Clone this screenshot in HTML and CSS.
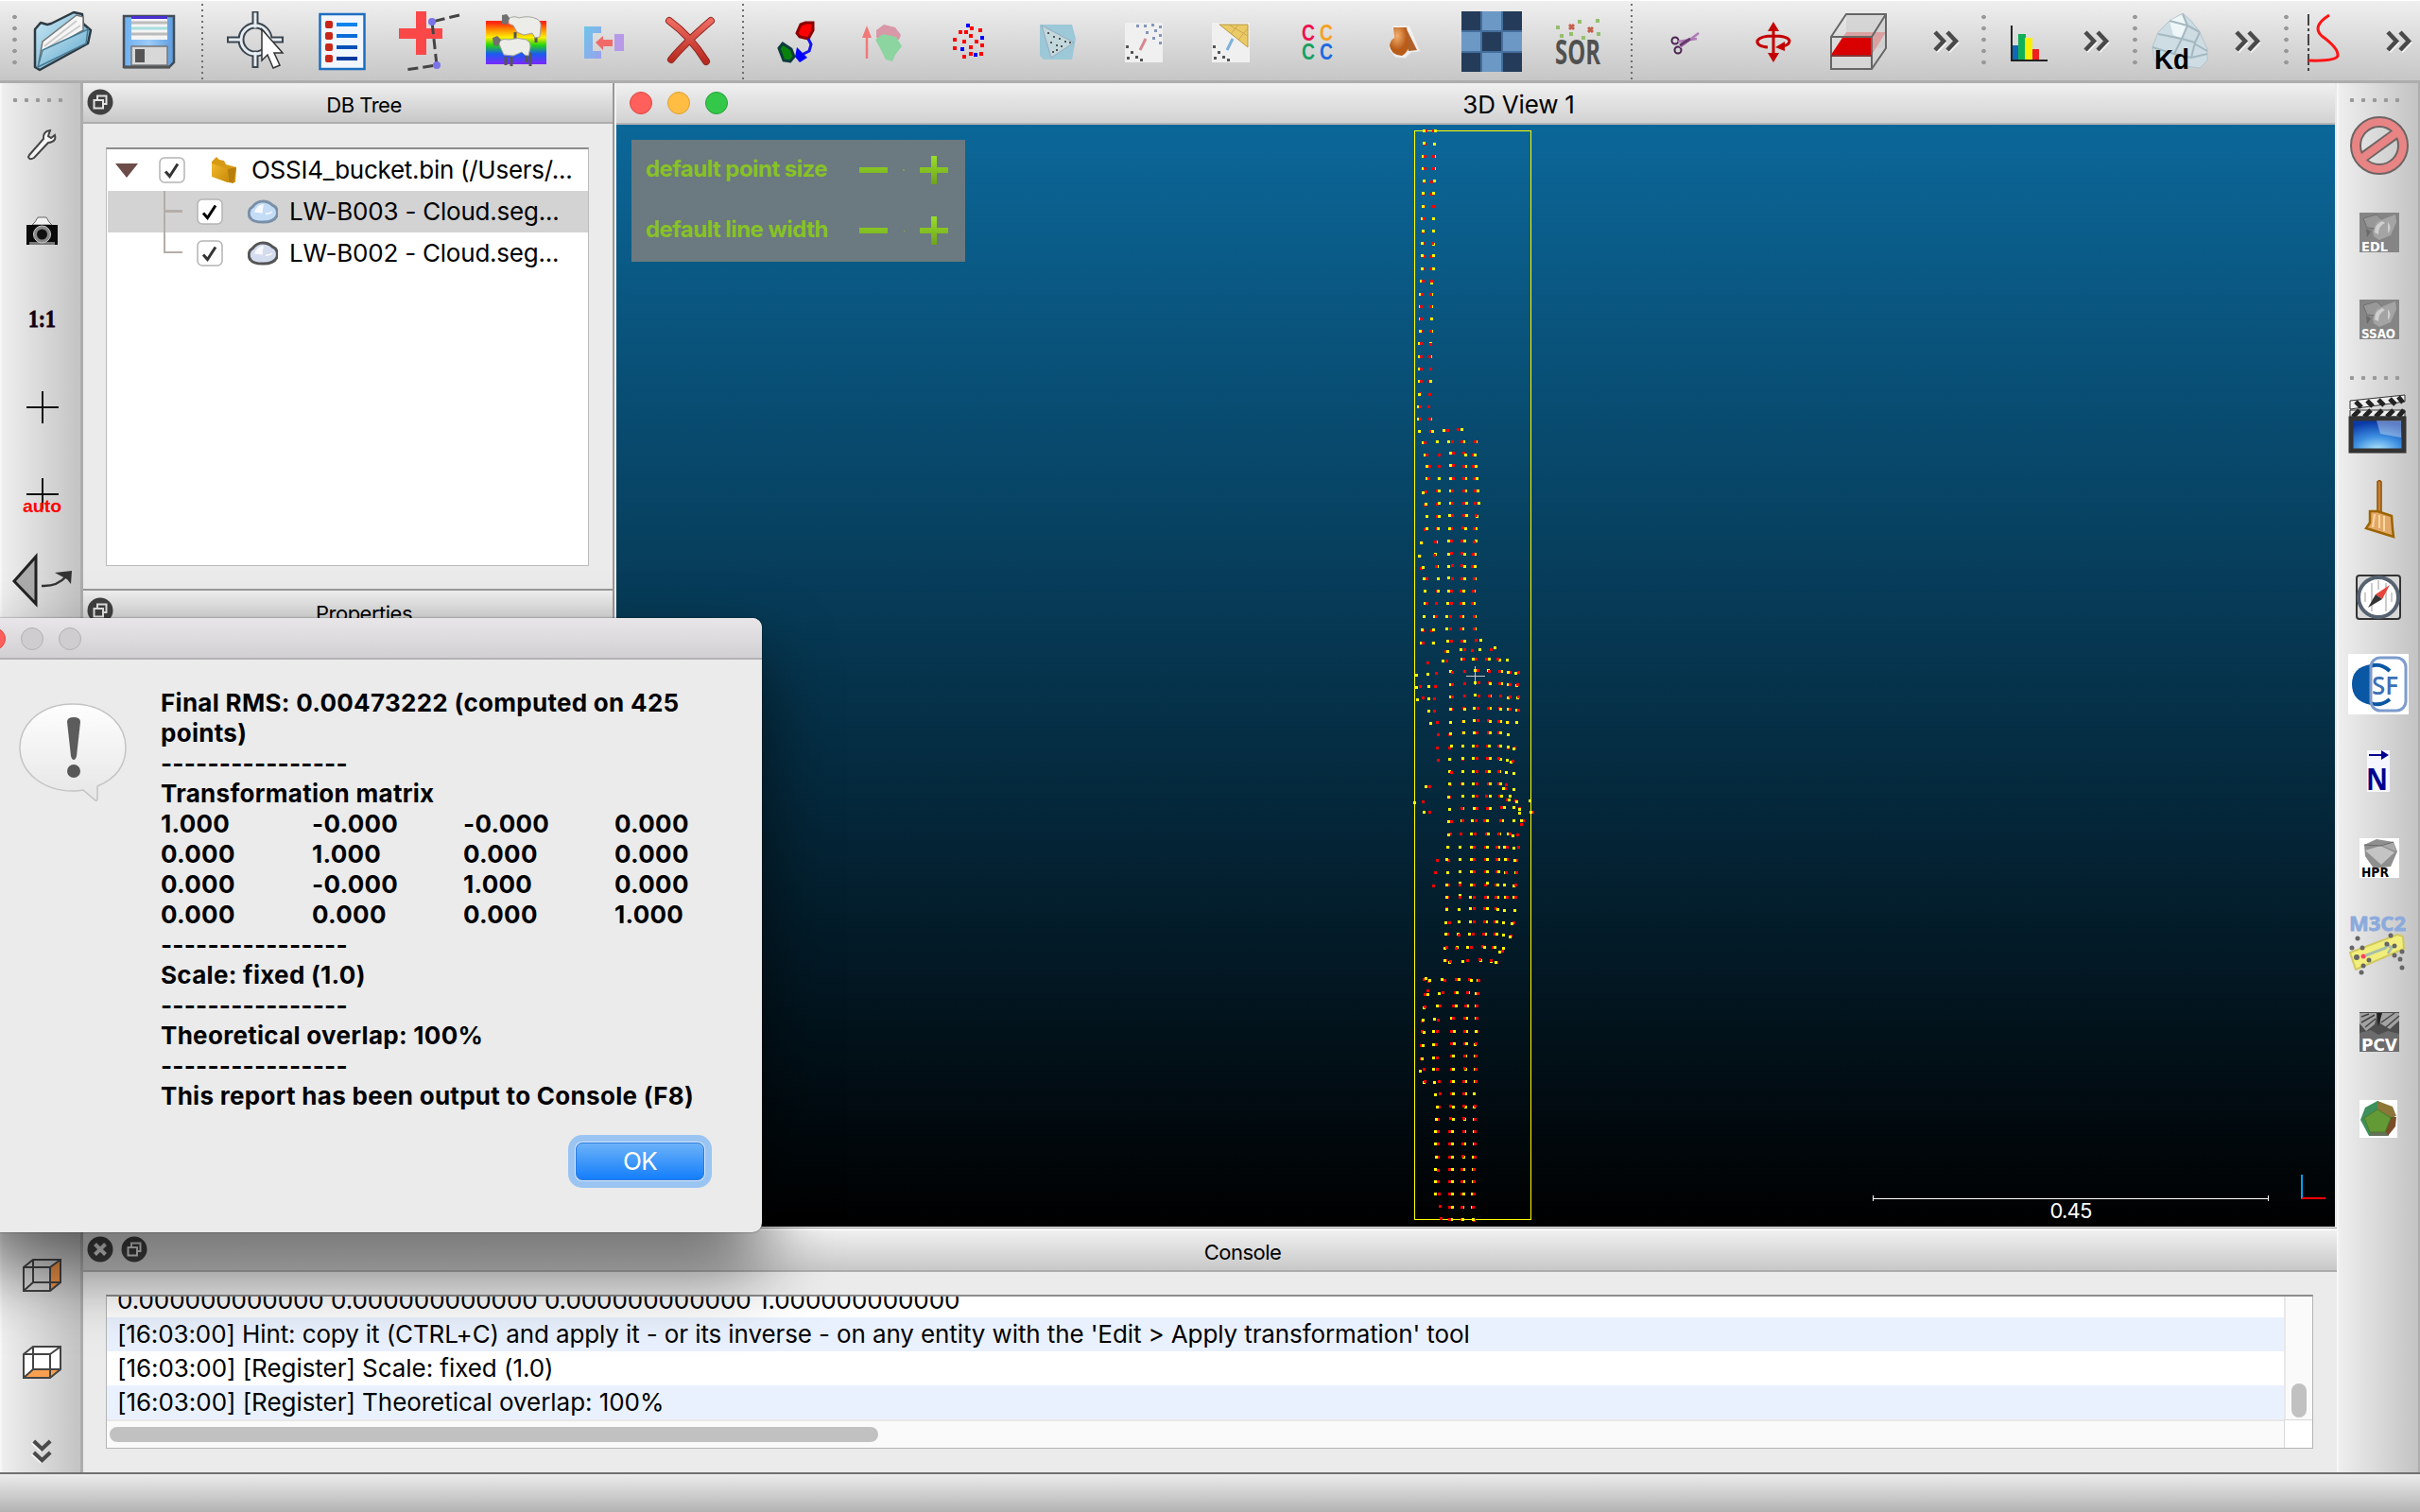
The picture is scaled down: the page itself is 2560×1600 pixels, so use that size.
FILE: index.html
```html
<!DOCTYPE html>
<html lang="en">
<head>
<meta charset="utf-8">
<title>CloudCompare</title>
<link rel="stylesheet" href="styles.css">
</head>
<body>
<svg class="defs" width="0" height="0">
  <defs>
    <linearGradient id="gGreen" x1="0" y1="0" x2="0" y2="1"><stop offset="0" stop-color="#99de2a"/><stop offset="1" stop-color="#6da31c"/></linearGradient>
    <linearGradient id="gFolder" x1="0" y1="0" x2="1" y2="1"><stop offset="0" stop-color="#cdeaf6"/><stop offset=".6" stop-color="#86bfdb"/><stop offset="1" stop-color="#a9d9ec"/></linearGradient>
    <linearGradient id="gDisk" x1="0" y1="0" x2="1" y2="0"><stop offset="0" stop-color="#6fb0f0"/><stop offset=".5" stop-color="#9ccbf8"/><stop offset="1" stop-color="#5b9bdf"/></linearGradient>
    <linearGradient id="gRain" x1="0" y1="0" x2="0" y2="1"><stop offset=".05" stop-color="#ff2a10"/><stop offset=".2" stop-color="#ff8a00"/><stop offset=".38" stop-color="#ffee00"/><stop offset=".56" stop-color="#22d410"/><stop offset=".76" stop-color="#1a5cf0"/><stop offset="1" stop-color="#7a28ff"/></linearGradient>
    <linearGradient id="gMerge" x1="0" y1="0" x2="1" y2="1"><stop offset="0" stop-color="#6cc6e8"/><stop offset="1" stop-color="#9aa0ee"/></linearGradient>
    <linearGradient id="gX" x1="0" y1="0" x2="0" y2="1"><stop offset="0" stop-color="#ee6a60"/><stop offset="1" stop-color="#b82a20"/></linearGradient>
    <linearGradient id="gGold" x1="0" y1="0" x2="1" y2="1"><stop offset="0" stop-color="#f2b92e"/><stop offset="1" stop-color="#c98a08"/></linearGradient>
    <radialGradient id="gOrange" cx=".4" cy=".3"><stop offset="0" stop-color="#f5b070"/><stop offset="1" stop-color="#b85c18"/></radialGradient>
    <radialGradient id="gScreen" cx=".5" cy="1" r=".9"><stop offset="0" stop-color="#b8ecff"/><stop offset=".5" stop-color="#3c8ee0"/><stop offset="1" stop-color="#0a3aa8"/></radialGradient>
    <linearGradient id="gBubble" x1="0" y1="0" x2="0" y2="1"><stop offset="0" stop-color="#fefefe"/><stop offset="1" stop-color="#e6e6e6"/></linearGradient>
    <symbol id="more" viewBox="0 0 28 24"><path d="M2 2l9 9.500L2 21M15 2l9 9.500L15 21" transform="translate(1.500 2)" fill="none" stroke="#fff" stroke-width="3.500" opacity=".7"/><path d="M2 2l9 9.500L2 21M15 2l9 9.500L15 21" fill="none" stroke="#4a4a4a" stroke-width="4.500"/></symbol>
    <symbol id="float" viewBox="0 0 28 28"><circle cx="14" cy="14" r="13.5" fill="#404040"/><path d="M11 11V7.500h9.500V16H18" fill="none" stroke="#e2e2e2" stroke-width="2"/><rect x="7.500" y="12" width="9.500" height="8.500" fill="#404040" stroke="#e2e2e2" stroke-width="2"/></symbol>
    <symbol id="check" viewBox="0 0 28 28"><rect x="1" y="1" width="26" height="26" rx="5" fill="#fff" stroke="#b4b4b4" stroke-width="1.500"/><path d="M7 15.500l4.500 5L20 7.500" fill="none" stroke="currentColor" stroke-width="3"/></symbol>
    <symbol id="cloud" viewBox="0 0 32 26"><path d="M3 20C0 16 1 10 5 8c3-4 6-6 11-6s8 2 10 4c5 2 6 7 5 11-2 5-8 7-15 7-6 0-11-1-13-4z" fill="var(--fill)" stroke="currentColor" stroke-width="3"/><path d="M8 13q2-6 8-7-1 5-1 8zM19 15q3 1 7-2" fill="#fff" stroke="#fff" stroke-width="1.500" opacity=".85"/></symbol>
    <symbol id="cell" viewBox="0 0 42 42"><path fill="#858585" d="M0 0h42v42H0z"/><path d="M4 6l14-4 8 7-7 8-11-1z" fill="#989898" stroke="#707070"/><path d="M14 20l4-10 12-5 8-3 1 8-6 14-12 5-6-4z" fill="#a4a4a4"/><path d="M16 21q0-9 8-12l3 2q-7 3-7 12zM30 10q5 6 0 12" fill="#cfcfcf"/><path d="M7 17l5 3-4 6z" fill="#6a6a6a"/></symbol>
  </defs>
</svg>

<header class="toolbar">
  <i class="grip"></i>
  <span class="tool first"><svg viewBox="0 0 64 64"><path d="M3 19l6-7 7 2 4-1L44 1l9 2 1 10 8 7-3 14L8 62l-5-3z" fill="url(#gFolder)" stroke="#2e3a42" stroke-width="2.500" stroke-linejoin="round"/><path d="M7 54l4-22L47 4l7 2v14L14 43z" fill="#f6f6f6" stroke="#777" stroke-width="1.500"/><path d="M13 37L47 10M13 41l38-26" stroke="#ccc" stroke-width="2"/><path d="M6 59l5-18 48-22-2 15z" fill="url(#gFolder)" stroke="#47788f" stroke-width="1.500"/></svg></span>
  <span class="tool"><svg viewBox="0 0 64 64"><path d="M5 5h53v49l-5 5H5z" fill="url(#gDisk)" stroke="#444c55" stroke-width="2.500"/><path d="M13 5h38v25H13z" fill="#f4f4f4"/><path d="M13 5h38v3H13z" fill="#4830d0"/><path d="M13 12h38M13 24h38" stroke="#bbb" stroke-width="3"/><path d="M13 18h38" stroke="#a8dede" stroke-width="3"/><path d="M13 37h38v20H13z" fill="#d8d8d8" stroke="#777" stroke-width="1.500"/><path d="M17 40h10v14H17z" fill="#555"/><path d="M5 59h49" stroke="#555" stroke-width="3"/></svg></span>
  <i class="sep"></i>
  <span class="tool"><svg viewBox="0 0 64 64"><g fill="none" stroke="#3b4650" stroke-width="7"><circle cx="32" cy="30" r="15"/><path d="M32 0v18M32 42v18M2 30h18M44 30h18"/></g><g fill="none" stroke="#e8edf2" stroke-width="3"><circle cx="32" cy="30" r="15"/><path d="M32 1.500v16M32 43v15M4 30h14M46 30h14"/></g><path d="M39 19v33l6-6 6 14 7-3-6-13h9z" fill="#fff" stroke="#333" stroke-width="1.500"/></svg></span>
  <span class="tool"><svg viewBox="0 0 64 64"><rect x="8.500" y="3" width="47" height="58" fill="#f2f7ff" stroke="#1d6ec0" stroke-width="2.500"/><g fill="#c8281a"><rect x="14" y="10" width="8" height="8" rx="2"/><rect x="14" y="22" width="8" height="8" rx="2"/><rect x="14" y="34" width="8" height="8" rx="2"/><rect x="14" y="46" width="8" height="8" rx="2"/></g><path fill="#0a84ec" d="M26 12h22v4H26z"/><path fill="#0a6cd8" d="M26 24h22v4H26z"/><path fill="#0850b8" d="M26 36h22v4H26z"/><path fill="#06389c" d="M26 48h22v4H26z"/></svg></span>
  <span class="tool"><svg viewBox="0 0 64 64"><path d="M18 0h11v18h17v11H29v17H18V29H0V18h18z" fill="#fa4848"/><path d="M64 4L35 11l5 46L6 62" fill="none" stroke="#444" stroke-width="3" stroke-dasharray="11 5"/><circle cx="35" cy="11" r="4" fill="#7a74e8"/><circle cx="40" cy="57" r="4" fill="#7a74e8"/></svg></span>
  <span class="tool"><svg viewBox="0 0 64 64"><rect y="10" width="64" height="46" fill="url(#gRain)"/><g stroke="#555" stroke-width="3"><path d="M31 22v8M53 24v9M21 48v9M27 48v10M47 44v14M43 46v8"/></g><g fill="#ecece9" stroke="#a4a4a0"><path d="M24 8q5-4 11-1 10-3 19 1 5 3 4 9l-1 10-5 1-3-5-9 2-7-3-4-7-5-2z"/><path d="M13 32q6-4 12-2 9-3 18 0 5 3 4 8l-2 9-4-1-3-3-9 4-10-1-4-9z"/></g><path d="M17 4l5-1 3 4-3 7-5-1zM7 28l5-2 4 4-3 7-5-1z" fill="#707070"/></svg></span>
  <span class="tool"><svg viewBox="0 0 64 64"><path d="M12 16h18v7h-9v19h9v8H12z" fill="url(#gMerge)"/><path d="M44 24h10v18H44z" fill="#b69ae8"/><path d="M24 33l8-7v4h10v7H32v4z" fill="#f06a68"/></svg></span>
  <span class="tool"><svg viewBox="0 0 64 64"><path d="M10 10q22 16 39 43M54 10Q26 34 12 51" fill="none" stroke="#8c2a22" stroke-width="8" stroke-linecap="round"/><path d="M10 10q22 16 39 43M54 10Q26 34 12 51" fill="none" stroke="url(#gX)" stroke-width="6" stroke-linecap="round"/></svg></span>
  <i class="sep"></i>
  <span class="tool"><svg viewBox="0 0 64 64"><path d="M37 14l5-2h8v8l-5 9-9-2-3-4z" fill="#f00" stroke="#8a0000" stroke-width="3"/><path d="M14 39l4-5 9 6 3 8-4 5-7-1z" fill="#0a820a" stroke="#0c3c3c" stroke-width="3"/><path d="M45 29l3 6-2 7-10 5" fill="none" stroke="#1414f0" stroke-width="3"/><path d="M33 38l-2 10 5 6 8-5z" fill="#00f"/></svg></span>
  <span class="tool"><svg viewBox="0 0 64 64"><path d="M15 50V25" stroke="#f07a78" stroke-width="2.500"/><path d="M15 15l5 13H10z" fill="#f07a78"/><path d="M25 20l8-6 12 3 6 8-2 5-24-2z" fill="#d898a8"/><path d="M24 30l8-6 14 3 6 10-7 9-3 7-7-2-6-12z" fill="#8cd4a0"/></svg></span>
  <span class="tool"><svg viewBox="0 0 64 64"><g fill="#f00"><path d="M26 20h4v4h-4zM32 16h4v4h-4zM41 18h4v4h-4zM20 20h4v4h-4zM31 24h4v4h-4zM14 28h4v4h-4zM24 30h4v4h-4zM37 30h4v4h-4zM14 37h4v4h-4zM31 36h4v4h-4zM43 34h4v4h-4zM31 43h4v4h-4zM24 46h4v4h-4zM42 43h4v4h-4z"/></g><path fill="#00f" d="M28 13h4v4h-4zM43 26h4v4h-4zM22 38h4v4h-4zM36 44h4v4h-4z"/></svg></span>
  <span class="tool"><svg viewBox="0 0 64 64"><path d="M14 14h34l4 15-4 22H18l-4-4z" fill="#9cc8d8"/><path d="M16 15l34 18-24 16z" fill="#c2d8dc" stroke="#9ab"/><g fill="#555"><path d="M22 22h2v2h-2zM28 26h2v2h-2zM34 28h2v2h-2zM40 31h2v2h-2zM25 32h2v2h-2zM31 35h2v2h-2zM36 36h2v2h-2zM27 42h2v2h-2zM31 40h2v2h-2zM45 32h2v2h-2z"/></g></svg></span>
  <span class="tool"><svg viewBox="0 0 64 64"><path fill="#f0f0f0" d="M12 12h40v42H12z"/><path fill="#8296b8" d="M24 14h3v3h-3zM32 14h3v3h-3zM40 13h3v3h-3zM48 15h3v3h-3zM34 21h3v3h-3zM43 19h3v3h-3zM41 27h3v3h-3zM48 24h3v3h-3zM48 32h3v3h-3z"/><path d="M28 41l6-12" stroke="#d48890" stroke-width="3"/><path fill="#555" d="M13 36h3v3h-3zM18 42h3v3h-3zM14 48h3v3h-3zM23 47h3v3h-3zM28 50h3v3h-3z"/></svg></span>
  <span class="tool"><svg viewBox="0 0 64 64"><path fill="#f0f0f0" d="M12 12h40v42H12z"/><path d="M20 14h30v24z" fill="#ecca66" stroke="#b89c44"/><path d="M30 14l20 12M40 14L32 24M50 18L40 30" stroke="#c8a850"/><path d="M28 41l6-12" stroke="#7cb0dc" stroke-width="3"/><path fill="#555" d="M13 36h3v3h-3zM18 42h3v3h-3zM14 48h3v3h-3zM23 47h3v3h-3zM28 50h3v3h-3z"/></svg></span>
  <span class="tool"><svg viewBox="0 0 64 64" class="cc"><text x="15" y="31" fill="#f01050" textLength="14" lengthAdjust="spacingAndGlyphs">C</text><text x="34" y="31" fill="#f8a020" textLength="14" lengthAdjust="spacingAndGlyphs">C</text><text x="15" y="51" fill="#18a060" textLength="14" lengthAdjust="spacingAndGlyphs">C</text><text x="34" y="51" fill="#2068e0" textLength="14" lengthAdjust="spacingAndGlyphs">C</text></svg></span>
  <span class="tool"><svg viewBox="0 0 64 64"><path d="M21 17h15l10 24-8 1-6 6-9-1-6-7 5-12z" fill="#fff" stroke="#fff" stroke-width="3" opacity=".6"/><path d="M33 17l12 24-9 1-5-16z" fill="#b0602a"/><path d="M20 17h14l1 12q4 12-6 18-12-1-13-11 1-6 5-8z" fill="url(#gOrange)"/></svg></span>
  <span class="tool"><svg viewBox="0 0 64 64"><path fill="#243c5a" d="M0 0h64v64H0z"/><path fill="#6c98c6" d="M22 0h20v20H22zM0 22h20v20H0zM44 22h20v20H44zM22 44h20v20H22z"/><path d="M0 21h64M0 43h64M21 0v64M43 0v64" stroke="#456e9c" stroke-width="2"/></svg></span>
  <span class="tool"><svg viewBox="0 0 64 64" class="sor"><path fill="#94bf6c" d="M8 15h4v4H8zM12 24h4v4h-4zM22 22h4v4h-4zM31 9h4v4h-4zM35 26h4v4h-4zM50 8h4v4h-4zM51 22h4v4h-4z"/><path d="M22 14l5 5m0-5l-5 5M42 17l5 5m0-5l-5 5" stroke="#c4604c" stroke-width="3"/><text x="7" y="56" textLength="48" lengthAdjust="spacingAndGlyphs">SOR</text></svg></span>
  <i class="sep"></i>
  <span class="tool"><svg viewBox="0 0 64 64"><g fill="none" stroke="#4a2450" stroke-width="2"><circle cx="22" cy="31" r="3.500"/><circle cx="25" cy="41" r="3.500"/></g><path d="M25 32l20-3M27 38l20-15" stroke="#b07ab8" stroke-width="2.500"/><path d="M27 36l11-7" stroke="#653b6c" stroke-width="3"/></svg></span>
  <span class="tool"><svg viewBox="0 0 64 64"><g fill="none" stroke="#c40000" stroke-width="3"><path d="M34 18v30M28 38q-12-1-11-7 3-5 17-5 15 0 17 5 0 5-8 6"/></g><path fill="#c40000" d="M34 11l6 10H28zM34 54l6-10H28zM46 32v10l-10-4z"/></svg></span>
  <span class="tool"><svg viewBox="0 0 64 64"><path d="M19 3h42v36H19z" fill="#ccc" fill-opacity=".6"/><path d="M3 27h43v34H3z" fill="#ddd" fill-opacity=".5"/><path d="M19 22h42L46 46H3z" fill="#e08080" opacity=".6"/><path d="M15 28h31v18H3z" fill="#d80000"/><path d="M19 3h42v36L46 61H3V27zM3 27h43v34M46 27L61 3M19 3L3 27" fill="none" stroke="#666" stroke-width="2"/><path d="M3 47h43" stroke="#833" stroke-width="2"/></svg></span>
  <span class="chev"><svg><use href="#more"/></svg></span>
  <i class="grip"></i>
  <span class="tool mini"><svg viewBox="0 0 64 64"><path d="M13 36h8v16h-8z" fill="#1068b8"/><path d="M20 24h8v28h-8z" fill="#10b058"/><path d="M27 28h8v24h-8z" fill="#f8f000"/><path d="M35 40h7v12h-7z" fill="#f02020"/><path d="M13 15v37h38" fill="none" stroke="#222" stroke-width="2"/></svg></span>
  <span class="chev b"><svg><use href="#more"/></svg></span>
  <i class="grip"></i>
  <span class="tool mini"><svg viewBox="0 0 64 64" class="kd"><path d="M34 2l9 8 9 12 8 18 0 12-8 8-14-2-18 2L4 52 2 38l6-16 12-12z" fill="#cddde3" stroke="#b4c4ca"/><path d="M34 3l5 12-6 14-9-4-4-15z" fill="#eef6f8"/><path d="M34 3l5 12 13 7M39 15L20 10M39 15l-6 14L8 24M33 29l14 4 5-11M47 33l-4 16 17-4M33 29l-8 16L2 38M43 49L25 45M46 34l14 8" fill="none" stroke="#a4b8c0" stroke-width="2"/><text x="4" y="61" textLength="37" lengthAdjust="spacingAndGlyphs">Kd</text></svg></span>
  <span class="chev b"><svg><use href="#more"/></svg></span>
  <i class="grip"></i>
  <span class="tool mini"><svg viewBox="0 0 64 64"><path d="M7 3v60" stroke="#444" stroke-width="2" stroke-dasharray="12 3 3 3"/><path d="M29 4Q10 16 21 26q18 13 17 21-2 6-31 5" fill="none" stroke="#ff1414" stroke-width="3"/></svg></span>
  <span class="chev b"><svg><use href="#more"/></svg></span>
</header>

<main class="work">
  <nav class="side left">
    <i class="hgrip"></i>
    <span class="tool"><svg viewBox="0 0 64 64"><path d="M19 42L34 25q-1-8 7-9l-2 6 3 2 4-3q2 7-7 8L24 45q-5 3-6-1z" fill="#f6f6f6" stroke="#444" stroke-width="2"/></svg></span>
    <span class="tool"><svg viewBox="0 0 64 64"><path d="M25 21l3-5h9l3 5 3 3H22z" fill="#f2f2f2" stroke="#666"/><path fill="#0a0a0a" d="M16 24h33v21H16z"/><path fill="#777" d="M19 42h27v3H19z"/><circle cx="32.500" cy="34" r="9" fill="#888" stroke="#ccc" stroke-width="1"/><circle cx="32.500" cy="34" r="5.500" fill="#111"/></svg></span>
    <span class="tool"><svg viewBox="0 0 64 64" class="one"><text x="18" y="40" textLength="29" lengthAdjust="spacingAndGlyphs">1:1</text></svg></span>
    <span class="tool"><svg viewBox="0 0 64 64"><path d="M33 16v34M16 33h34" stroke="#111" stroke-width="2"/></svg></span>
    <span class="tool"><svg viewBox="0 0 64 64" class="auto"><path d="M33 16v33M16 33h34" stroke="#111" stroke-width="2"/><text x="12" y="52" textLength="41" lengthAdjust="spacingAndGlyphs">auto</text></svg></span>
    <span class="tool"><svg viewBox="0 0 64 64"><path d="M26 7v50L3 33z" fill="#ababab" stroke="#222" stroke-width="3"/><path d="M32 38q16 1 26-10" fill="none" stroke="#333" stroke-width="2.500"/><path d="M64 22l-1 14-4-5-13-7z" fill="#333"/></svg></span>
    <span class="tool lower"><svg viewBox="0 0 64 64"><path d="M41 23l11-8v24l-11 9z" fill="#f09348"/><path d="M13 23l10-8h29v24L41 48H13zM13 23h28v25M41 23l11-8M23 15v24h29M23 39l-10 9" fill="none" stroke="#444" stroke-width="2"/></svg></span>
    <span class="tool"><svg viewBox="0 0 64 64"><path d="M13 22l10-8h29v24L41 48H13z" fill="#fff"/><path d="M23 39h29l-11 9H13z" fill="#f8a050"/><path d="M13 23l10-8h29v24L41 48H13zM13 23h28v25M41 23l11-8M23 15v24h29M23 39l-10 9" fill="none" stroke="#444" stroke-width="2"/></svg></span>
    <span class="down"><svg><use href="#more"/></svg></span>
  </nav>

  <div class="center">
    <div class="upper">
      <section class="docks">
        <div class="bar"><svg class="float"><use href="#float"/></svg><span class="cap">DB Tree</span></div>
        <div class="treewrap">
          <div class="tree">
            <div class="row root"><i class="tri"></i><svg class="chk"><use href="#check"/></svg><svg class="folder" viewBox="0 0 32 30"><path d="M3 6l5-5 3 3 5 1 2 4 11 3-1 16-8 0L3 21z" fill="#d79a14"/><path d="M3 8l17 6v14L3 22z" fill="url(#gGold)"/><path d="M20 14l9-2-3 17-5-1z" fill="#b87e0a"/></svg><span class="t1">OSSI4_bucket.bin (/Users/...</span></div>
            <div class="row kid sel"><i class="br"></i><svg class="chk on"><use href="#check"/></svg><svg class="cloud c1"><use href="#cloud"/></svg><span class="t2">LW-B003 - Cloud.seg...</span></div>
            <div class="row kid last"><i class="br"></i><svg class="chk"><use href="#check"/></svg><svg class="cloud c2"><use href="#cloud"/></svg><span class="t2">LW-B002 - Cloud.seg...</span></div>
          </div>
        </div>
        <div class="bar props"><svg class="float"><use href="#float"/></svg><span class="cap">Properties</span></div>
      </section>

      <section class="view">
        <div class="vtitle"><i class="light r"></i><i class="light y"></i><i class="light g"></i><span>3D View 1</span></div>
        <div class="gl">
          <div class="hot">
            <div class="hrow"><b>default point size</b><svg viewBox="0 0 94 30"><path d="M0 12h30v6H0zM64 12h12V0h6v12h12v6H82v12h-6V18H64z" fill="url(#gGreen)"/><path d="M46 14h2v2h-2z" fill="#7d9f4c"/></svg></div>
            <div class="hrow"><b>default line width</b><svg viewBox="0 0 94 30"><path d="M0 12h30v6H0zM64 12h12V0h6v12h12v6H82v12h-6V18H64z" fill="url(#gGreen)"/><path d="M47 15h1v1h-1z" fill="#87c226"/></svg></div>
          </div>
          <canvas class="points" width="140" height="1166"></canvas>
          <div class="scale"><i></i><span>0.45</span></div>
          <div class="axes"></div>
        </div>
      </section>
    </div>

    <section class="console">
      <div class="bar"><svg class="float" viewBox="0 0 28 28"><circle cx="14" cy="14" r="13.500" fill="#404040"/><path d="M8.500 8.500l11 11m0-11l-11 11" stroke="#dcdcdc" stroke-width="4"/></svg><svg class="float"><use href="#float"/></svg><span class="cap">Console</span></div>
      <div class="logwrap">
        <div class="log">
          <div class="lines">
            <p>0.000000000000 0.000000000000 0.000000000000 1.000000000000</p>
            <p class="alt hint">[16:03:00] Hint: copy it (CTRL+C) and apply it - or its inverse - on any entity with the 'Edit &gt; Apply transformation' tool</p>
            <p>[16:03:00] [Register] Scale: fixed (1.0)</p>
            <p class="alt">[16:03:00] [Register] Theoretical overlap: 100%</p>
          </div>
          <div class="vscroll"><i></i></div>
          <div class="hscroll"><i></i></div>
          <div class="corner"></div>
        </div>
      </div>
    </section>
  </div>

  <nav class="side right">
    <i class="hgrip"></i>
    <span class="tool"><svg viewBox="0 0 64 64"><g fill="none" stroke="#6c6464"><circle cx="33" cy="32" r="25" stroke-width="12"/><path d="M15 45l36-26" stroke-width="12"/></g><g fill="none" stroke="#e98484"><circle cx="33" cy="32" r="25" stroke-width="8"/><path d="M14 46l38-28" stroke-width="8"/></g></svg></span>
    <span class="tool"><svg viewBox="0 0 64 64" class="pix"><use href="#cell" x="12" y="11" width="42" height="42"/><text x="14" y="52" textLength="28" lengthAdjust="spacingAndGlyphs">EDL</text></svg></span>
    <span class="tool"><svg viewBox="0 0 64 64" class="pix"><use href="#cell" x="12" y="11" width="42" height="42"/><text x="14" y="52" textLength="36" lengthAdjust="spacingAndGlyphs">SSAO</text></svg></span>
    <i class="hgrip second"></i>
    <span class="tool"><svg viewBox="0 0 64 64"><path d="M2 8l58-6v7L2 17z" fill="#eee" stroke="#333"/><path d="M2 18h58v7H2z" fill="#eee" stroke="#333"/><path d="M5 25l7-7m5 7l7-7m5 7l7-7m5 7l7-7m5 7l6-7M8 9l6 6m6-7l6 6m6-7l6 6m6-7l6 6m3-8l5 6" stroke="#222" stroke-width="5"/><rect x="3" y="27" width="56" height="34" fill="url(#gScreen)" stroke="#333" stroke-width="5"/><path d="M30 29h26v18l-22-4z" fill="#fff" opacity=".35"/></svg></span>
    <span class="tool"><svg viewBox="0 0 64 64"><path d="M31 2q2-3 4 0v32h-4z" fill="#c98038" stroke="#8a5206" stroke-width="1.500"/><path d="M23 33h8l15 5 1 14 1 8-29-9 4-6z" fill="#e2a868" stroke="#9c6400" stroke-width="2.500"/><path d="M28 36l-2 14M33 37v14M38 38v16" stroke="#ffd8a0" stroke-width="2"/></svg></span>
    <span class="tool"><svg viewBox="0 0 64 64"><rect x="9" y="9" width="46" height="46" rx="3" fill="#d8d8d8" stroke="#333" stroke-width="2"/><circle cx="32" cy="32" r="21" fill="#fff" stroke="#566270" stroke-width="4"/><path d="M25 17v30M32 14v10M40 17v30M18 27v10M46 27v10" stroke="#ccc" stroke-width="2"/><path d="M29 29l15-10-8 15z" fill="#e8443c"/><path d="M29 29l-8 14 15-9z" fill="#333"/></svg></span>
    <span class="tool"><svg viewBox="0 0 64 64" class="sf"><path fill="#fff" d="M0 0h64v64H0z"/><path d="M24 11Q4 14 4 32t20 22z" fill="#0a57a4"/><path d="M24 13q10-4 20 5M24 52q10 4 20-4" fill="none" stroke="#0a57a4" stroke-width="4"/><rect x="24" y="4" width="37" height="56" rx="10" fill="none" stroke="#7c9ccc" stroke-width="3"/><text x="25" y="43" textLength="28" lengthAdjust="spacingAndGlyphs">SF</text></svg></span>
    <span class="tool"><svg viewBox="0 0 64 64" class="nn"><path fill="#f6f6ff" d="M20 10h24v44H20z"/><path d="M22 14h13v-4l8 5-8 5v-4H22z" fill="#000090"/><text x="19" y="52" textLength="23" lengthAdjust="spacingAndGlyphs">N</text></svg></span>
    <span class="tool"><svg viewBox="0 0 64 64" class="hpr"><path fill="#fff" d="M12 11h42v42H12z"/><path d="M17 18l13-6 18 3 4 10-7 16-18 2-9-13z" fill="#8f8f8f"/><path d="M18 24l16-5 15 7-14 13z" fill="#c4c4c4"/><path d="M34 18l14-3 3 10z" fill="#a8a8a8"/><path d="M17 18l17 1 14-4" stroke="#666" fill="none"/><text x="14" y="52" textLength="29" lengthAdjust="spacingAndGlyphs">HPR</text></svg></span>
    <span class="tool"><svg viewBox="0 0 64 64" class="m3"><text x="1" y="17" textLength="60" lengthAdjust="spacingAndGlyphs">M3C2</text><path d="M2 40l50-19 6 2 1 13L8 58z" fill="#f2ee7c" stroke="#d0c860" stroke-width="2"/><path d="M16 44l24-9v-4l6 4-4 6" fill="none" stroke="#a8c0a8" stroke-width="3"/><g fill="#666"><circle cx="10" cy="25" r="2.500"/><circle cx="4" cy="35" r="2.500"/><circle cx="15" cy="35" r="2.500"/><circle cx="9" cy="45" r="3"/><circle cx="22" cy="48" r="2.500"/><circle cx="16" cy="54" r="2.500"/><circle cx="14" cy="61" r="2.500"/><circle cx="45" cy="22" r="2.500"/><circle cx="41" cy="31" r="2.500"/><circle cx="49" cy="33" r="2.500"/><circle cx="57" cy="39" r="2.500"/><circle cx="49" cy="43" r="2.500"/><circle cx="55" cy="47" r="2.500"/><circle cx="57" cy="56" r="2.500"/></g><circle cx="16" cy="44" r="2.500" fill="#f46"/></svg></span>
    <span class="tool"><svg viewBox="0 0 64 64" class="pix"><path fill="#4e4e4e" d="M12 11h42v42H12z"/><path d="M12 12h19l-3 12-9 7-7-8zM34 12h20v8l-10 9-10-6z" fill="#a2a2a2"/><path d="M14 22l14-8M18 27l11-9M35 22l14-10M40 27l14-12M14 16l8-3" stroke="#444" stroke-width="1.500" fill="none"/><path d="M12 33l12-3 8 5 10-4 12 3v19H12z" fill="#6c6c6c"/><path d="M30 12l2 14 4-14z" fill="#222"/><text x="14" y="52" class="big" textLength="38" lengthAdjust="spacingAndGlyphs">PCV</text></svg></span>
    <span class="tool"><svg viewBox="0 0 64 64"><path fill="#fff" d="M12 12h40v40H12z"/><path d="M31 13l-13 7-5 13 9 17 19 0 9-16-3-13z" fill="#3d8f5c"/><path d="M31 13l0 9 14 8 6-1-4-10z" fill="#8c7638"/><path d="M45 30l6 0-1 10-8 10-3-4z" fill="#7a4c28"/><path d="M22 46h18l3 4H24z" fill="#66705a"/><path d="M31 22l14 9-6 15H23L17 31z" fill="#649a36" stroke="#4c7c28"/></svg></span>
  </nav>
</main>
<footer class="status"></footer>

<div class="dialog">
  <div class="dtitle"><i class="light r"></i><i class="light o"></i><i class="light o"></i></div>
  <div class="dbody">
    <svg class="bubble" viewBox="0 0 120 110"><path d="M60 6C28 6 4 26 4 52s24 46 56 46q6 0 11-1l13 11q2 1 2-2V93c19-8 30-22 30-41C116 26 92 6 60 6z" fill="url(#gBubble)" stroke="#c4c4c4" stroke-width="1.500"/><path d="M54 25q0-5 7-5t7 5l-4 36q-1 4-3 4t-3-4z" fill="#5c5c5c"/><circle cx="61" cy="77" r="7" fill="#585858"/></svg>
    <div class="msg">
      <p>Final RMS: 0.00473222 (computed on 425</p><p>points)</p><p class="dash">----------------</p><p>Transformation matrix</p>
      <div class="matrix"><span>1.000</span><span>-0.000</span><span>-0.000</span><span>0.000</span><span>0.000</span><span>1.000</span><span>0.000</span><span>0.000</span><span>0.000</span><span>-0.000</span><span>1.000</span><span>0.000</span><span>0.000</span><span>0.000</span><span>0.000</span><span>1.000</span></div>
      <p class="dash">----------------</p><p>Scale: fixed (1.0)</p><p class="dash">----------------</p><p>Theoretical overlap: 100%</p><p class="dash">----------------</p><p>This report has been output to Console (F8)</p>
    </div>
  </div>
  <button class="ok">OK</button>
</div>
<script src="points.js"></script>
</body>
</html>
```
FILE: styles.css
```css
* { box-sizing: border-box; }
html, body { margin: 0; padding: 0; }
body { width: 2560px; height: 1600px; overflow: hidden; background: #ebebeb; font-family: Inter, "Liberation Sans", sans-serif; font-size: 26px; color: #000; display: flex; flex-direction: column; position: relative; }
p { margin: 0; }
i { display: block; flex: none; }
svg { display: block; flex: none; overflow: visible; }
.defs { position: absolute; }

.toolbar { height: 88px; flex: none; display: flex; align-items: stretch; background: linear-gradient(#efefef, #c6c6c6); border-top: 1px solid #fff; border-bottom: 3px solid #adadad; padding-left: 13px; }
.toolbar .grip { width: 5px; height: 60px; margin-top: 14px; background: radial-gradient(circle at 2.5px 3px, #999 2px, transparent 2.6px) 0 0 / 5px 12px repeat-y; }
.toolbar .tool { width: 92px; flex: none; display: flex; justify-content: center; padding-top: 11px; }
.toolbar .first { margin-left: 2px; }
.tool svg { width: 64px; height: 64px; }
.sep { width: 20px; background: repeating-linear-gradient(#6e6e6e 0 2px, transparent 2px 6px) 9px 3px / 2px 80px no-repeat; }
.chev { width: 77px; padding: 31px 0 0 33px; flex: none; }
.chev svg { width: 28px; height: 24px; }
.chev.b { width: 53px; padding-left: 11px; }
.toolbar .grip + .mini { margin-left: -1px; width: 93px; }
.toolbar .chev + .grip { margin-left: 7px; }
.toolbar .chev.b + .grip { margin-left: 10px; }

.work { height: 1470px; flex: none; display: flex; }
.side { width: 88px; flex: none; display: flex; flex-direction: column; background: linear-gradient(90deg, #fafafa 0, #eee 3px, #c4c4c4 84px); border-right: 3px solid #adadad; }
.side .tool { height: 92px; flex: none; display: flex; align-items: center; padding-left: 12px; }
.hgrip { height: 20px; margin-left: 13px; width: 60px; background: radial-gradient(circle at 3px 18px, #999 2px, transparent 2.6px) 0 0 / 12px 20px repeat-x; }
.hgrip.second { height: 18px; background-position: 0 -2px; }
.side .lower { margin-top: 644px; }
.down { padding: 37px 0 0 31px; }
.down svg { width: 26px; height: 22px; transform: rotate(90deg); }
.right { border-right: 2px solid #adadad; }

.center { width: 2384px; display: flex; flex-direction: column; }
.upper { height: 1210px; display: flex; }
.docks { width: 562px; flex: none; display: flex; flex-direction: column; border-right: 2px solid #989898; }
.bar { height: 43px; flex: none; display: flex; align-items: center; position: relative; background: linear-gradient(#f0f0f0, #c8c8c8); border-bottom: 2px solid #adadad; padding: 0 0 2px 4px; gap: 8px; }
.bar .float { width: 28px; height: 28px; }
.cap { flex: 1; text-align: center; font-size: 22px; letter-spacing: -.5px; line-height: 28px; padding-top: 6px; }
.docks .cap { padding-right: 6px; }
.console .cap { padding-right: 7px; padding-top: 5px; }
.treewrap { height: 494px; flex: none; padding: 25px 0 0 24px; border-bottom: 2px solid #989898; }
.tree { width: 511px; height: 443px; background: #fff; border: 1px solid #bbb; border-top: 2px solid #8c8c8c; padding: 0 0 0 1px; }
.row { height: 44px; display: flex; align-items: center; white-space: nowrap; line-height: 42px; }
.row span { padding-bottom: 1px; }
.tri { border: 12px solid transparent; border-top: 15px solid #6b4c48; border-bottom: 0; margin-left: 8px; }
.chk { width: 28px; height: 28px; color: #333; }
.chk.on { color: #000; }
.root .chk { margin-left: 22px; }
.folder { width: 32px; height: 30px; margin-left: 25px; }
.t1 { margin-left: 13px; letter-spacing: -.27px; }
.kid .br { width: 20px; height: 44px; margin: 0 15px 0 59px; background: linear-gradient(#b4aeaa, #b4aeaa) 0 0 / 2px 44px no-repeat, linear-gradient(#b4aeaa, #b4aeaa) 0 20px / 20px 3px no-repeat; }
.kid.last .br { background-size: 2px 22px, 20px 2px; }
.sel { background: #d3d3d3; }
.cloud { width: 32px; height: 26px; margin-left: 26px; }
.c1 { --fill: #c4dcf6; color: #7a90a8; }
.c2 { --fill: #d4dcf0; color: #555; }
.t2 { margin-left: 12px; letter-spacing: -.22px; }
.props { border-bottom: 0; }

.view { flex: 1; border-left: 2px solid #f2f2f2; border-right: 2px solid #e9e9e9; }
.vtitle { height: 44px; display: flex; align-items: center; background: linear-gradient(#f0f0f0, #d2d2d2); border-bottom: 2px solid #b4b4b4; padding-left: 14px; gap: 16px; }
.vtitle span { flex: 1; text-align: center; padding: 2px 43px 0 0; letter-spacing: -.2px; }
.light { width: 24px; height: 24px; border-radius: 50%; border: 1px solid; }
.light.r { background: #ff605c; border-color: #e0443e; }
.light.y { background: #ffbd44; border-color: #dea032; }
.light.g { background: #34c84a; border-color: #22a136; }
.light.o { background: #cfcdcf; border-color: #b2b0b2; }
.gl { height: 1166px; position: relative; background: linear-gradient(#0b6799, #000); }
.hot { position: absolute; left: 16px; top: 16px; width: 353px; height: 129px; background: #6b7980; }
.hrow { height: 64px; display: flex; align-items: center; padding: 0 18px 0 15px; justify-content: space-between; color: #87c226; font-size: 24px; white-space: nowrap; }
.hrow b { font-weight: 700; letter-spacing: -.55px; padding-bottom: 3px; }
.hrow svg { width: 94px; height: 30px; }
.points { position: absolute; left: 838px; top: 0; }
.scale { position: absolute; left: 1329px; top: 1133px; width: 419px; text-align: center; color: #fff; font-size: 22px; line-height: 20px; letter-spacing: -.8px; }
.scale i { height: 6px; border: 1px solid #fff; border-top: 0; border-bottom: 0; background: linear-gradient(#fff, #fff) 0 3px / 100% 1px no-repeat; }
.axes { position: absolute; left: 1782px; top: 1111px; width: 26px; height: 26px; border-left: 2px solid #00a2f0; border-bottom: 2px solid #f00; }

.console { height: 260px; display: flex; flex-direction: column; padding-top: 2px; background: linear-gradient(#f4f4f4 0 1px, #999 1px 3px, #ebebeb 3px); }
.console .bar { height: 46px; border-top: 2px solid #fff; }
.logwrap { flex: 1; padding: 24px 25px 25px 24px; }
.log { height: 163px; border: 1px solid #b4b4b4; border-top: 2px solid #8c8c8c; display: grid; grid-template: 130px 30px / 1fr 30px; }
.lines { height: 130px; overflow: hidden; display: flex; flex-direction: column; justify-content: flex-end; background: #fff; }
.lines p { height: 36px; flex: none; line-height: 36px; padding-left: 11px; white-space: nowrap; letter-spacing: -.05px; }
.lines .alt { background: #eaf1fe; }
.lines .hint { letter-spacing: -.11px; }
.vscroll { background: #fafafa; border-left: 2px solid #e8e8e8; padding: 92px 0 0 6px; }
.vscroll i { width: 16px; height: 36px; border-radius: 8px; background: #c1c1c1; }
.hscroll { background: #fafafa; border-top: 2px solid #e8e8e8; padding: 6px 0 0 3px; }
.hscroll i { width: 813px; height: 16px; border-radius: 8px; background: #c1c1c1; }
.corner { background: #fff; border: 1px solid #d8d8d8; border-width: 1px 0 0 1px; }
.status { flex: 1; background: linear-gradient(#ececec, #b3b3b3); border-top: 2px solid #707070; }

.dialog { position: absolute; left: -32px; top: 654px; width: 838px; height: 650px; background: #ebebeb; border-radius: 10px; box-shadow: 0 0 2px rgba(0,0,0,.55), 0 40px 76px rgba(0,0,0,.55); }
.dtitle { height: 44px; border-radius: 10px 10px 0 0; background: linear-gradient(#e9e6e9, #d2d0d2); border-bottom: 2px solid #b1b1b1; display: flex; align-items: center; gap: 16px; padding: 1px 0 0 14px; }
.dbody { display: flex; padding: 30px 0 0 49px; }
.bubble { width: 120px; height: 110px; margin-top: 11px; }
.msg { margin-left: 33px; font-weight: 700; font-size: 26px; line-height: 32px; white-space: nowrap; letter-spacing: .29px; }
.msg .dash { letter-spacing: .2px; }
.matrix { display: grid; grid-template-columns: repeat(4, 160px); }
.ok { position: absolute; left: 641px; top: 555px; width: 136px; height: 40px; border: 1px solid #2a7ae0; border-radius: 7px; padding: 0 0 2px; background: linear-gradient(#6cb2f8, #147efb); box-shadow: 0 0 0 1px #d8e8f8, 0 0 0 8px #9ac4f2; color: #fff; font: 26px Inter, sans-serif; letter-spacing: -.6px; }

.cc text { font: 700 23px "Liberation Sans", sans-serif; stroke-width: .6px; }
.sor text { font: 700 36px "Open Sans", sans-serif; fill: #505050; }
.kd text { font: 700 29px "Liberation Sans", sans-serif; fill: #000; }
.one text { font: 700 26px "Liberation Serif", serif; fill: #140014; stroke: #140014; stroke-width: .8px; }
.auto text { font: 700 19px "Liberation Sans", sans-serif; fill: #f00; }
.pix text { font: 700 14px "DejaVu Sans", sans-serif; fill: #fff; }
.pix .big { font-size: 18px; }
.sf text { font: 600 27px "Open Sans", sans-serif; fill: #3c70b4; }
.nn text { font: 700 33px "Open Sans", sans-serif; fill: #000090; }
.hpr text { font: 700 14px "DejaVu Sans", sans-serif; fill: #000; }
.m3 text { font: 700 22px "Open Sans", sans-serif; fill: #8caadc; stroke: #8caadc; stroke-width: .8px; }
```
FILE: points.js
```js
// Section slices: "y: token token ..." with y = yellow cloud, r = red cloud, optional @y.
const upper = `
49: r144 y139 r170 y175
88: r142 y139@85 r171 y172
123: y136 r142 y173 r170
158: y136 r142 y173 r170
193: r140@195 y139 r163@195 y172
229: r137@231 y136 r164@231 y169
266: r140 y136 r169
301: y133 r139 r166 y169
337: r137@339 y136 r166 y169
372: r137 y133 y169@374 r166
408: r138@410 y133 r164@410 y169
445: r137 y133 r164 y169
480: y130 r136 y163@484 r163
518: y127 r133 y164 r160
553: y127 r130 y164 r160
588: y127 r130 r160 y163
623: r131 y127 y164 r160
659: y124 r130 y160@657 r160@661
696: y124 r130 y161 r157
731: y124 r130 r160
766: y124 r130 r158 y160
803: r127@801 y124 r157
839: y120 r127 r154
875: y120 r127 y161 r158
910: y124 r160 y166 y202@907 r214@907 r248@904 y259@904
941: y136 r142 r178@939 y181@939 y217@939 r229@939 y265@939 r259@939 y305@939 r302@939
976: y142 r148 r187 y223@972 r232@972 r265@972 y271 r295 y301
1010: y148 r157 r187 y223@1007 r232@1007 y271 r265 r295 y304
1045: y148 r154 r184 y187 y223 r232 y271 r265 r298 y307
1080: y136@1085 r145@1083 r181 y187 y223 r229 y271 r265 r302 y310
1115: r142@1121 y145@1118 r181@1118 y187 y223 r229 r265 y274 r302 y313
1150: y148@1153 r181@1153 y187@1153 y220 r229 r265 y274 y307@1153 r304
1188: r142@1191 y148 r181 y184 r227 y220 y271 r262@1185 y305 r298
1225: r133@1229 y130@1229 y179 r175 y217@1223 r226@1223 y268@1223 r259@1223 y304@1223 r298
1261: r127@1267 y124@1267 y175 r172@1264 y217 r226@1258 r259@1258 y268 y302 r295
1296: r130@1302 y136@1299 y182 r178 y217 r229@1294 r259@1294 y268 r292 y301
1332: y139 r148 y184 y217@1329 r229 r259 y268 y302 r298
1367: y142 r181 y184 y217 r226 r256 y265 y298 r295
1403: y142 r148 r178 y214 r226 r256 y265 y299 r293
1440: y139 y172 r178 y211 r223 y263 r256 y302 r298
1475: r136@1480 y133@1477 r163@1480 y169@1477 y211 r223 y263 r256 y302 r298
1510: y130@1515 r136@1515 r166@1515 y169@1515 y214 r226 r259 y268 r304@1507 y319@1507
1533: r209@1540 y214@1540 y256 r268 r292@1537 y316 r352 y364@1529
1561: r211@1567 y199@1567 y259 r265 y296 r304 r337 y346 y379@1564 r373 y403@1564`;
const lower = `
120: r151@98 y115@129 y151@128 r178@125 y223 r229@122 r268 y301@118 r310@118 y343@118 r347 y386 r379 r412@123 y407@123 y430@125 r439@122
153: y115@160 r127@157 y154@157 r175@157 y223 r229 r268@150 y301@149 r313@149 r346@149 y349@151 y386@150 r379@150 y406 r412 y433@155 r436
184: y118@191 r136@186 y154@188 r172@188 y223 r229 r268@181 y301@180 r313@181 y349@181 r346@181 r382@181 y406@187 r412 y436@187 r439
215: y154@219 r172@219 r227 y223 r265@212 y268 y298@212 r310@212 y350@212 r343@212 r379@212 y382 y406 r412 y433@217 r439@217
245: y160@250 r181@248 y223@248 r262 y266 y298@243 r310@243 r343@243 y349 y383 r377 r407@248 y403@248 y433@248
275: r184@279 r220@279 y223@276 r262 y266 y298 r307 r343 y350 r377 y382 y406@279
307: r181@312 r220@312 y226 y262 y295 r307 r340 y347 r376 y382 r407@312 y406@310 r427@312 y424@314
339: r184@343 r224@341 y220@341 r262@341 y262 y295 r307 r340 y349 y382@340 r376 y403@343 y415@348 r421@346
371: y220 r226@374 y262 y295 r307 r337 y346 y380 r376 y400@374 y424@376
402: r223@405 y220 r260 y262 y295 r307 r343 y349 r377 y382 y145@409 r157@409 r400@405 r397@414 y391@414 r423@417 y424@417
433: r220@436 y218@436 y262 y295 r307 r337 y349 r380 y385 y412 r403@443 y409@443 r430@445 y433@447 y475@445 y109@450 r136@447
464: y220@466 y262 r260 y298 r307 r340 y349 r385@462 y394@462 y424@462 r442@464 y442@467 y442@476 y139@474 r157@474 r484@474 y479@474
496: y217@497 r226@497 y259 r262 y292 r304 r331 y340 y388 r383 y424 y448 r454 y448 r448@504
528: r223 y217@531 r256 y289 r301 r337 y343 y380 r376 y406 r412 y421@533 r436@531
561: r218 y214 r253 y253 y289 r298 r334 y341 y377 r370 r403 y394@563 y424@564 r439
592: r217@595 y211 r253 y253 y289 r298 r334 y341 y377 r370 r403 y397 r433@595 y427@595 r181@595
624: y214@626 y253 y289 r298 r334 y341 r370 y377 y397@626 r401@626 y430@626 r434@626 r175@626
656: r217 y211 y253@653 r253@657 y289 r298 r334 y341@652 r368 y374 y394 y424@659 r430@657 r169@659
687: r215 y211 y253@684 r253 y286 r298 y339 r334 y374 r368 y397 r403@688 y424@688 r430
717: r212 y211@719 y250@719 y286 r298 r331 y340 r368 y373@719 y394@721 y427@721
749: y208@752 r220@752 y250 y286 r298 y338 r331 r364 y371 y391@752 r424@752 y418@755
781: r214 y208 y247 r250@783 y283 r295 y334 r328 r364 y370 y391@783 r415@785 y412@788
814: y205@816 r211 y244 r241@816 y277 r289 r325@811 y331 r358 y364 y391@816 r388@823 y379@825
848: r209 y205 y220@851 r223@849 y262@850 r277@847 y319@848 r316@845 y352@849 r352 r371@851 y368@851
895: r139 y145@892 r154@899 y157@896 y196 r205@896 r241 y250 r283 y289@896 y309@896 r313@896
928: r151@923 r142@932 y151@932 y187@930 r199 r238 y245 y281 r278 y303@930 r310@930
962: y139@966 r142@963 y181 r190 r232 y241 y278 r271 y303 r307
992: r133@998 y136@996 y172@994 r184@996 y226 r232 y275 r268 y304 r307
1026: r133 y139@1028 y169 r181 r226 y235 y275 r268 r307 y304
1056: r130@1060 y136@1060 y169@1058 r178@1058 r226 y235 r268 y275 y301@1058 r304
1087: r130@1094 y133@1094 y169@1091 r181@1091 r226 y232 y272 r268 y301 r304
1121: y127@1124 r139 y169 r181 r226 y232 y271 r268@1118 y300 r304
1151: y139@1154 r142 y172@1154 r187 r226 y232 y271 r265 y300 r304
1182: y175@1184 r190 r226 y232 y271 r265 y298
1214: r186@1216 y181@1216 r223 y232@1216 y271@1216 r265 y298@1216 r301
1245: r184 y178 y232 r223@1243 y268 r265@1243 y298 r301
1278: y175 r184 r220 y229 y268 r266 y298 r301
1309: y175 r184 y229 r220@1307 y268 r262@1307 y298 r301
1341: r184 y178 r220 y229 y266 r262@1338 y295 r301
1372: y175 r184@1374 r220 y229 y265 r259 y295 r298
1404: y175 r184 y229 r220@1402 y265 r259@1402 y295 r298
1435: y175 r187@1433 y229 r220@1433 r259 y265 y292 r298
1467: r190@1465 r220 y229 y263 r259 y292 r295
1498: r193@1495 y226 r220 r260 y262 r298@1500 y295`;

const ctx = document.querySelector('.points').getContext('2d');
const X0 = 1490, Y0 = 132;
ctx.strokeStyle = '#ffff00';
ctx.strokeRect(1496.5 - X0, 138.5 - Y0, 123, 1152);
ctx.fillStyle = '#c8c8c8';
ctx.fillRect(1551 - X0, 715 - Y0, 20, 1);
ctx.fillRect(1560 - X0, 705 - Y0, 1, 20);

function plot(text, top, k) {
  for (const line of text.trim().split('\n')) {
    const [base, rest] = line.split(': ');
    for (const token of rest.split(' ')) {
      const [x, y] = token.slice(1).split('@');
      ctx.fillStyle = token[0] === 'y' ? '#ffff00' : '#ff0000';
      ctx.fillRect(Math.round(1460 + x / 3 - 1.5) - X0, Math.round(top + (y || base) * k - 1.5) - Y0, 3, 3);
    }
  }
}
plot(upper, 120, 0.3699);
plot(lower, 660, 0.4209);
```
